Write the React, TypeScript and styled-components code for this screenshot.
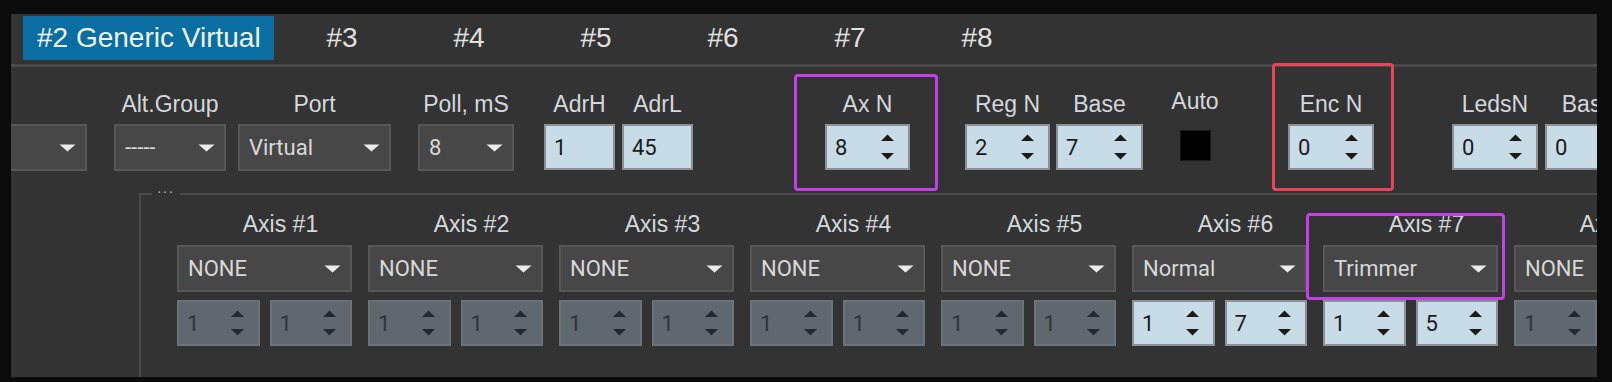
import React from 'react';
import styled, { createGlobalStyle } from 'styled-components';

const GlobalStyle = createGlobalStyle`
  html, body {
    margin: 0;
    padding: 0;
    background: #0b0b0b;
  }
`;

const Screen = styled.div`
  box-sizing: border-box;
  width: 1612px;
  height: 382px;
  padding: 14px 15px 5px 11px;
  background: #0b0b0b;
  display: flex;
`;

const Panel = styled.div`
  flex: 1;
  display: flex;
  flex-direction: column;
  background: #333333;
  overflow: hidden;
  font-family: 'Liberation Sans', Arial, sans-serif;
`;

const TabBar = styled.div`
  box-sizing: border-box;
  display: flex;
  align-items: flex-start;
  height: 53px;
  padding: 2px 0 0 12px;
  border-bottom: 3px solid #494949;
  flex-shrink: 0;
`;

const Tab = styled.div<{ $active?: boolean }>`
  height: 44px;
  display: flex;
  align-items: center;
  justify-content: center;
  flex-shrink: 0;
  font-size: 28px;
  white-space: nowrap;
  color: ${(p) => (p.$active ? '#eef3f6' : '#e0e0e0')};
  background: ${(p) => (p.$active ? '#0b6ea3' : 'transparent')};
  padding: ${(p) => (p.$active ? '0 13px 0 14px' : '0')};
  width: ${(p) => (p.$active ? 'auto' : '127px')};
  margin-right: ${(p) => (p.$active ? '5px' : '0')};
`;

const TopRow = styled.div`
  display: flex;
  align-items: flex-start;
  padding-top: 24px;
  flex-shrink: 0;
`;

const Field = styled.div<{ $ml: number; $w?: number }>`
  position: relative;
  display: flex;
  flex-direction: column;
  align-items: center;
  flex-shrink: 0;
  margin-left: ${(p) => p.$ml}px;
  ${(p) => (p.$w ? `width: ${p.$w}px;` : '')}
`;

const Label = styled.div<{ $up?: number }>`
  position: relative;
  top: ${(p) => (p.$up ? -p.$up : 0)}px;
  height: 26px;
  line-height: 26px;
  margin-bottom: 7px;
  font-size: 23px;
  color: #d3d8dd;
  white-space: nowrap;
`;

const SelectBox = styled.div<{ $w?: number }>`
  box-sizing: border-box;
  width: ${(p) => (p.$w ? `${p.$w}px` : '100%')};
  height: 47px;
  display: flex;
  align-items: center;
  padding: 0 9px 0 9px;
  background: #474747;
  border: 2px solid #575757;
  font-family: Roboto, 'Liberation Sans', sans-serif;
  font-size: 22px;
  color: #d8d8d8;
  flex-shrink: 0;
`;

const SelectText = styled.span`
  flex: 1;
  white-space: nowrap;
  overflow: hidden;
`;

const SpinBox = styled.div<{ $off?: boolean; $w?: number }>`
  box-sizing: border-box;
  width: ${(p) => (p.$w ? `${p.$w}px` : '100%')};
  height: 46px;
  display: flex;
  align-items: center;
  padding: 0 13px 0 8px;
  background: ${(p) => (p.$off ? '#5f686e' : '#c8dce7')};
  border: 2px solid ${(p) => (p.$off ? '#6a7378' : '#8b9196')};
  color: ${(p) => (p.$off ? '#2e3438' : '#1b1b1b')};
  font-family: Roboto, 'Liberation Sans', sans-serif;
  font-size: 22px;
  flex-shrink: 0;
`;

const SpinValue = styled.span`
  flex: 1;
`;

const Flag = styled.div`
  width: 31px;
  height: 31px;
  margin-top: 6px;
  background: #000;
  border: 1px solid #1a1a1a;
  box-sizing: border-box;
`;

const Highlight = styled.div<{ $color: string; $inset: string }>`
  position: absolute;
  inset: ${(p) => p.$inset};
  border: 3px solid ${(p) => p.$color};
  border-radius: 4px;
  pointer-events: none;
`;

const AxisGroup = styled.div`
  position: relative;
  flex: 1;
  display: flex;
  gap: 16px;
  margin: 22px 0 0 128px;
  padding: 16px 0 0 36px;
  border-top: 2px solid #4a4a4a;
  border-left: 2px solid #4a4a4a;
`;

const Legend = styled.span`
  position: absolute;
  top: -14px;
  left: 11px;
  width: 28px;
  height: 14px;
  line-height: 14px;
  background: #333333;
  color: #b8b8b8;
  font-size: 14px;
  letter-spacing: 2px;
  text-align: center;
`;

const AxisColumn = styled.div`
  width: 175px;
  flex-shrink: 0;
  display: flex;
  flex-direction: column;
`;

const AxisHead = styled.div`
  position: relative;
  display: flex;
  flex-direction: column;
`;

const AxisLabel = styled.div`
  height: 26px;
  line-height: 26px;
  margin-bottom: 8px;
  padding-left: 32px;
  text-align: center;
  font-size: 23px;
  color: #d3d8dd;
  white-space: nowrap;
`;

const SpinRow = styled.div`
  display: grid;
  grid-template-columns: 1fr 1fr;
  gap: 10px;
  margin-top: 8px;
`;

const PURPLE = '#c341e6';
const RED = '#e8455c';

const DropArrow = () => (
  <svg width="17" height="8" viewBox="0 0 17 8">
    <path d="M0.5 0.5 H16.5 L8.5 7.5 Z" fill="#ececec" />
  </svg>
);

const SpinArrows = ({ color }: { color: string }) => (
  <svg width="15" height="26" viewBox="0 0 15 26">
    <path d="M1 7 L7.5 0.5 L14 7 Z" fill={color} />
    <path d="M1 19 H14 L7.5 25.5 Z" fill={color} />
  </svg>
);

const Select = ({ value, w }: { value: string; w?: number }) => (
  <SelectBox $w={w}>
    <SelectText>{value}</SelectText>
    <DropArrow />
  </SelectBox>
);

const Spinner = ({ value, off, w }: { value: string; off?: boolean; w?: number }) => (
  <SpinBox $off={off} $w={w}>
    <SpinValue>{value}</SpinValue>
    <SpinArrows color={off ? '#24292c' : '#1a1a1a'} />
  </SpinBox>
);

const TextInput = ({ value, w }: { value: string; w: number }) => (
  <SpinBox $w={w}>
    <SpinValue>{value}</SpinValue>
  </SpinBox>
);

type Axis = { mode: string; a: string; b: string; on: boolean; mark?: boolean };

const axes: Axis[] = [
  { mode: 'NONE', a: '1', b: '1', on: false },
  { mode: 'NONE', a: '1', b: '1', on: false },
  { mode: 'NONE', a: '1', b: '1', on: false },
  { mode: 'NONE', a: '1', b: '1', on: false },
  { mode: 'NONE', a: '1', b: '1', on: false },
  { mode: 'Normal', a: '1', b: '7', on: true },
  { mode: 'Trimmer', a: '1', b: '5', on: true, mark: true },
  { mode: 'NONE', a: '1', b: '1', on: false },
];

const tabs = ['#3', '#4', '#5', '#6', '#7', '#8'];

export default function App() {
  return (
    <>
      <GlobalStyle />
      <Screen>
        <Panel>
          <TabBar>
            <Tab $active>#2 Generic Virtual</Tab>
            {tabs.map((t) => (
              <Tab key={t}>{t}</Tab>
            ))}
          </TabBar>

          <TopRow>
            <Field $ml={-60}>
              <Label>&nbsp;</Label>
              <Select value="" w={136} />
            </Field>
            <Field $ml={27}>
              <Label>Alt.Group</Label>
              <Select value="-----" w={112} />
            </Field>
            <Field $ml={12}>
              <Label>Port</Label>
              <Select value="Virtual" w={153} />
            </Field>
            <Field $ml={27}>
              <Label>Poll, mS</Label>
              <Select value="8" w={96} />
            </Field>
            <Field $ml={30}>
              <Label>AdrH</Label>
              <TextInput value="1" w={71} />
            </Field>
            <Field $ml={7}>
              <Label>AdrL</Label>
              <TextInput value="45" w={71} />
            </Field>
            <Field $ml={132}>
              <Label>Ax N</Label>
              <Spinner value="8" w={85} />
              <Highlight $color={PURPLE} $inset="-17px -28px -21px -31px" />
            </Field>
            <Field $ml={55}>
              <Label>Reg N</Label>
              <Spinner value="2" w={85} />
            </Field>
            <Field $ml={6}>
              <Label>Base</Label>
              <Spinner value="7" w={87} />
            </Field>
            <Field $ml={26} $w={52}>
              <Label $up={3}>Auto</Label>
              <Flag />
            </Field>
            <Field $ml={67}>
              <Label>Enc N</Label>
              <Spinner value="0" w={86} />
              <Highlight $color={RED} $inset="-28px -20px -21px -16px" />
            </Field>
            <Field $ml={78}>
              <Label>LedsN</Label>
              <Spinner value="0" w={86} />
            </Field>
            <Field $ml={7}>
              <Label>Base</Label>
              <Spinner value="0" w={86} />
            </Field>
          </TopRow>

          <AxisGroup>
            <Legend>...</Legend>
            {axes.map((ax, i) => (
              <AxisColumn key={i}>
                <AxisHead>
                  <AxisLabel>Axis #{i + 1}</AxisLabel>
                  <Select value={ax.mode} />
                  {ax.mark && <Highlight $color={PURPLE} $inset="2px -7px -8px -17px" />}
                </AxisHead>
                <SpinRow>
                  <Spinner value={ax.a} off={!ax.on} />
                  <Spinner value={ax.b} off={!ax.on} />
                </SpinRow>
              </AxisColumn>
            ))}
          </AxisGroup>
        </Panel>
      </Screen>
    </>
  );
}
